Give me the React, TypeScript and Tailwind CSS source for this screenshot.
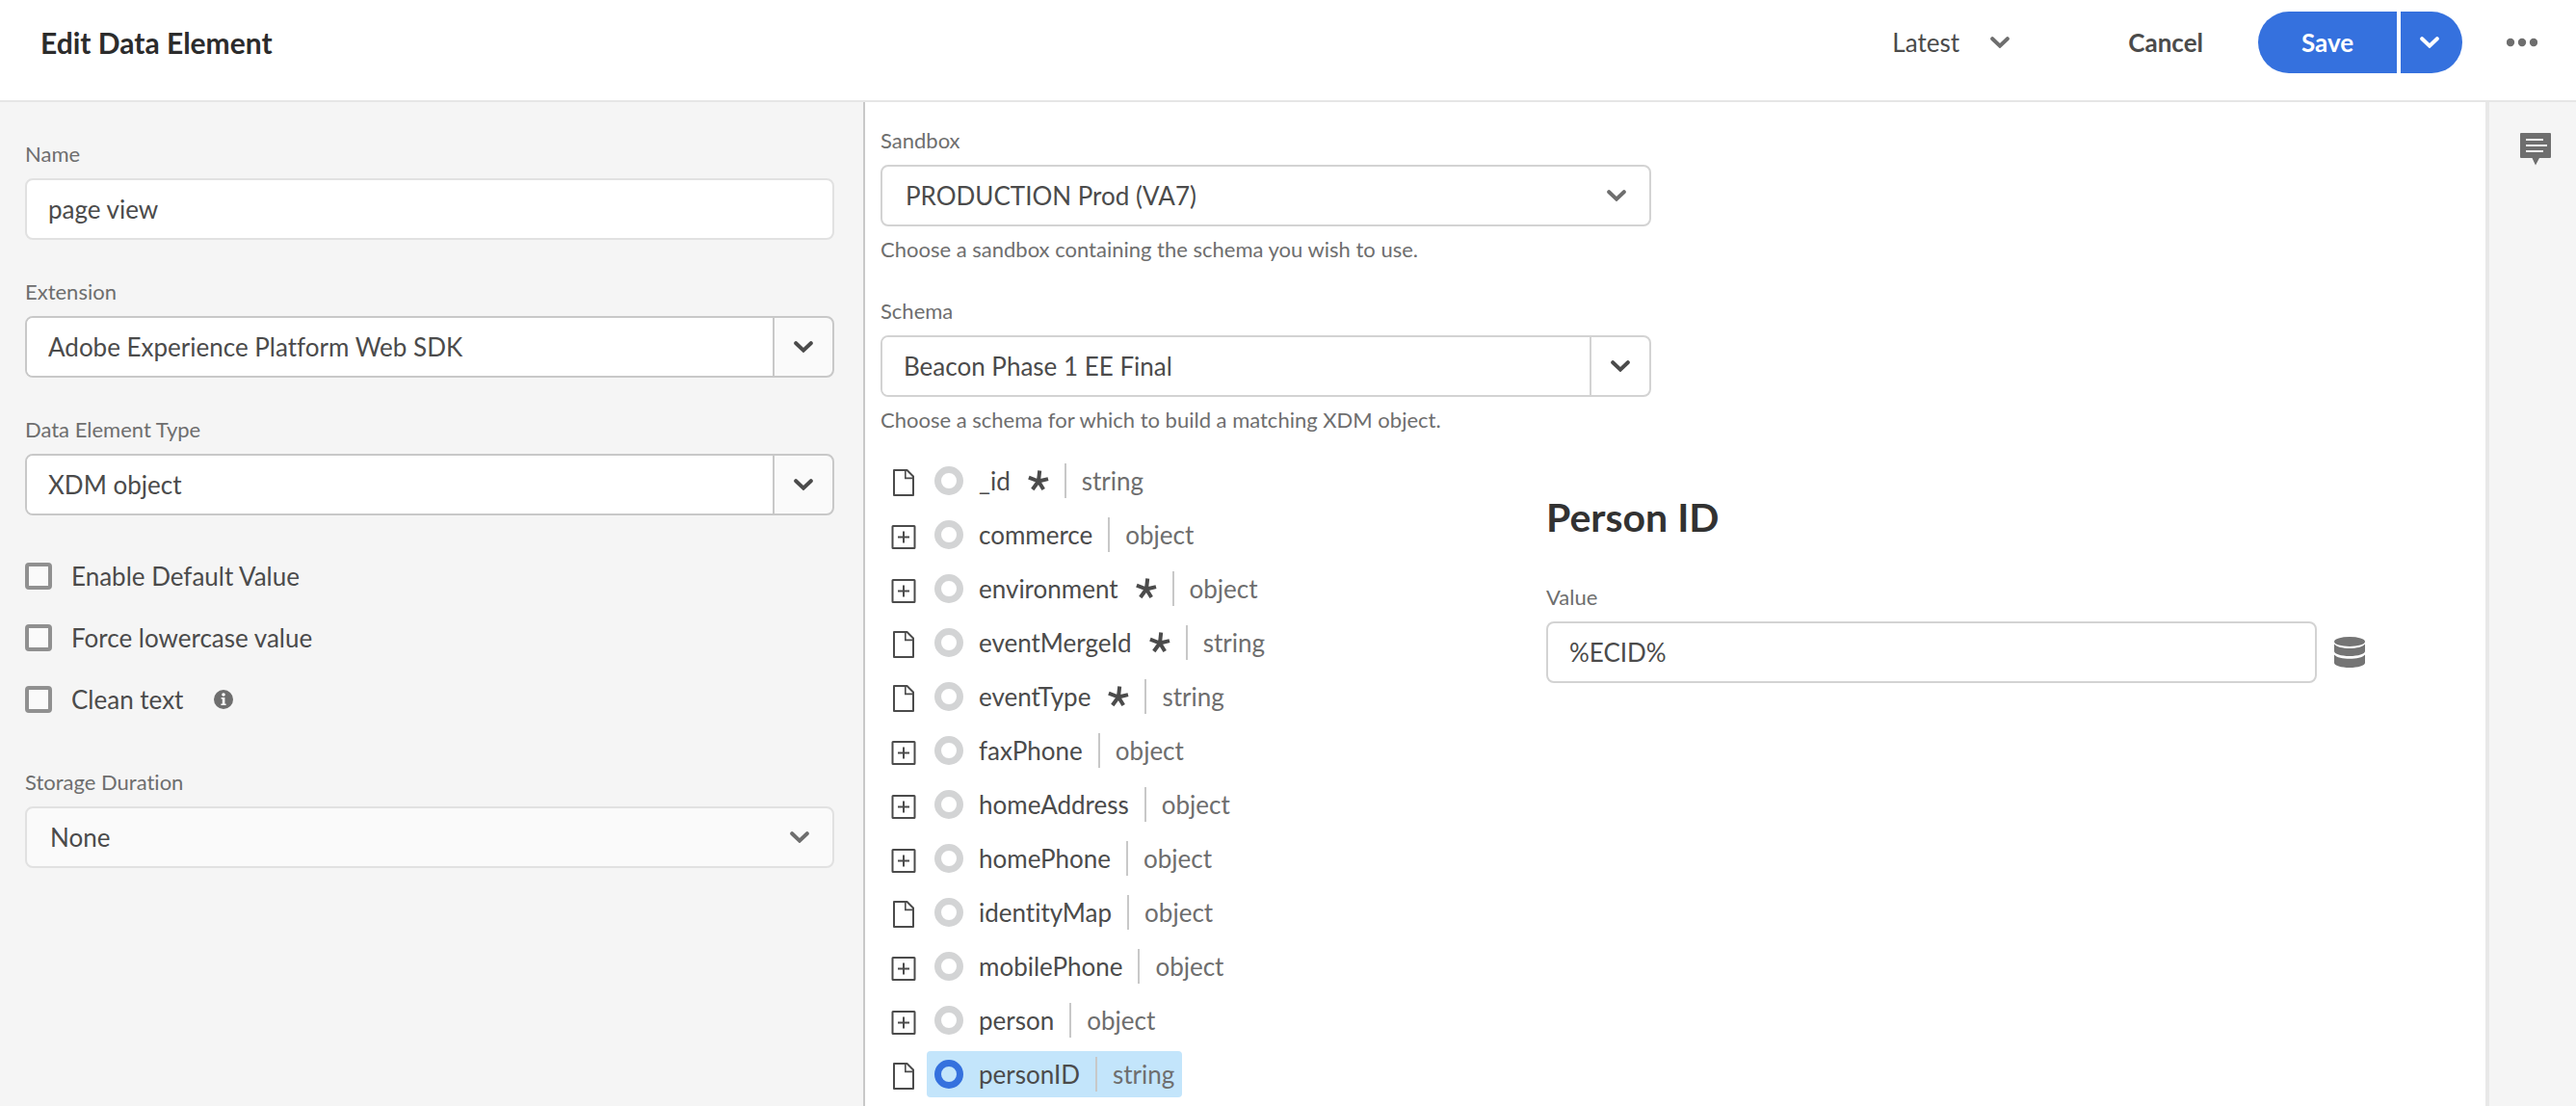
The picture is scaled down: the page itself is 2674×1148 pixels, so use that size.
import { useState, type ReactNode } from "react";

function Chevron({ className = "" }: { className?: string }) {
  return (
    <svg viewBox="0 0 20 12" className={`h-3 w-5 fill-none stroke-current ${className}`} aria-hidden="true">
      <path d="M2.2 2.2 10 9.6l7.8-7.4" strokeWidth="4" strokeLinecap="round" strokeLinejoin="miter" />
    </svg>
  );
}

function FileIcon() {
  return (
    <svg viewBox="0 0 26 32" className="h-8 w-[26px] shrink-0 fill-none stroke-[#4b4b4b]" aria-hidden="true">
      <path d="M3 5h13.5L23 11.5V31H3z" strokeWidth="2" strokeLinejoin="round" />
      <path d="M14.8 5v8.4H23" strokeWidth="1.6" />
    </svg>
  );
}

function ExpandIcon() {
  return (
    <svg viewBox="0 0 26 32" className="h-8 w-[26px] shrink-0 fill-none stroke-[#4b4b4b]" aria-hidden="true">
      <rect x="1.5" y="7" width="23" height="23" rx="0.5" strokeWidth="2" />
      <path d="M7 18.5h12M13 12.5v12" strokeWidth="2" />
    </svg>
  );
}

function Asterisk() {
  return (
    <svg viewBox="0 0 22 22" className="ml-[18px] h-[22px] w-[22px] fill-none stroke-[#4b4b4b]" role="img" aria-label="required">
      <path d="M11 11.5 12.2 0.500M11 11.5l10-2.4M11 11.5l5.200 8.500M11 11.5l-6.200 8.500M11 11.5 0.900 7.6" strokeWidth="4" />
    </svg>
  );
}

const labelClass = "block pb-[9px] text-[22px] leading-8 text-[#6e6e6e]";

function Field({ id, label, help, children }: { id: string; label: string; help?: string; children: ReactNode }) {
  return (
    <div>
      <label htmlFor={id} className={labelClass}>
        {label}
      </label>
      {children}
      {help && <p className="mt-2 text-[22px] leading-8 text-[#6e6e6e]">{help}</p>}
    </div>
  );
}

function ComboBox({ id, value, className }: { id: string; value: string; className: string }) {
  return (
    <div className={`flex h-16 overflow-hidden rounded-lg border-2 ${className}`}>
      <input id={id} defaultValue={value} className="min-w-0 flex-1 bg-white px-[22px] outline-none" />
      <button
        type="button"
        aria-label="Show options"
        className="flex w-[62px] shrink-0 items-center justify-center border-l-2 border-inherit"
      >
        <Chevron />
      </button>
    </div>
  );
}

function Picker({ id, value, className }: { id: string; value: string; className: string }) {
  return (
    <div className="relative">
      <select id={id} className={`h-16 w-full appearance-none rounded-lg border-2 px-6 outline-none ${className}`}>
        <option>{value}</option>
      </select>
      <Chevron className="pointer-events-none absolute top-[26px] right-[26px] text-[#6e6e6e]" />
    </div>
  );
}

function CheckOption({ label, children }: { label: string; children?: ReactNode }) {
  return (
    <div className="flex h-7 items-center">
      <label className="flex items-center gap-5">
        <input type="checkbox" className="size-7 appearance-none rounded border-4 border-[#909090] bg-[#fafafa]" />
        <span>{label}</span>
      </label>
      {children}
    </div>
  );
}

type Node = { name: string; type: "string" | "object"; required?: boolean; leaf?: boolean };

const nodes: Node[] = [
  { name: "_id", type: "string", required: true, leaf: true },
  { name: "commerce", type: "object" },
  { name: "environment", type: "object", required: true },
  { name: "eventMergeId", type: "string", required: true, leaf: true },
  { name: "eventType", type: "string", required: true, leaf: true },
  { name: "faxPhone", type: "object" },
  { name: "homeAddress", type: "object" },
  { name: "homePhone", type: "object" },
  { name: "identityMap", type: "object", leaf: true },
  { name: "mobilePhone", type: "object" },
  { name: "person", type: "object" },
  { name: "personID", type: "string", leaf: true },
];

function TreeRow({ node, selected, onSelect }: { node: Node; selected: boolean; onSelect: () => void }) {
  return (
    <li className="flex h-12 items-center gap-[11px]">
      {node.leaf ? (
        <FileIcon />
      ) : (
        <button type="button" aria-label={`Expand ${node.name}`}>
          <ExpandIcon />
        </button>
      )}
      <label className={`flex h-12 items-center rounded px-2 ${selected ? "bg-[#c3e5fb]" : ""}`}>
        <input
          type="radio"
          name="schema-node"
          checked={selected}
          onChange={onSelect}
          className="mr-4 size-[30px] appearance-none rounded-full border-[7px] border-[#d3d4d5] checked:border-[#3571de]"
        />
        <span>{node.name}</span>
        {node.required && <Asterisk />}
        <span className="ml-4 flex h-9 items-center border-l-2 border-[#c8c8c8] pl-4 text-[#6e6e6e]">{node.type}</span>
      </label>
    </li>
  );
}

export default function App() {
  const [selected, setSelected] = useState("personID");

  return (
    <div className="flex min-h-screen flex-col bg-white font-['Lato',sans-serif] text-[26px] leading-8 text-[#4b4b4b] [font-variant-ligatures:none]">
      <header className="flex h-[106px] items-center border-b-2 border-[#e6e6e6] pr-10 pb-4 pl-[42px]">
        <h1 className="mr-auto text-[30px] font-bold text-[#2c2c2c]">Edit Data Element</h1>
        <div className="relative mr-[123px] w-[122px]">
          <select aria-label="Version" className="w-full appearance-none bg-transparent outline-none">
            <option>Latest</option>
          </select>
          <Chevron className="pointer-events-none absolute top-[10px] right-0 text-[#6e6e6e]" />
        </div>
        <button type="button" className="mr-[57px] font-bold">
          Cancel
        </button>
        <div className="mr-[46px] flex gap-1 text-white">
          <button type="button" className="h-16 w-36 rounded-l-full bg-[#3571de] font-bold">
            Save
          </button>
          <button
            type="button"
            aria-label="More save options"
            className="flex size-16 items-center justify-center rounded-r-full bg-[#3571de] pr-1"
          >
            <Chevron />
          </button>
        </div>
        <button type="button" aria-label="More actions">
          <svg viewBox="0 0 32 10" className="h-[10px] w-8 fill-[#6e6e6e]" aria-hidden="true">
            <circle cx="4" cy="5" r="4.2" />
            <circle cx="16" cy="5" r="4.2" />
            <circle cx="28" cy="5" r="4.2" />
          </svg>
        </button>
      </header>

      <div className="grid flex-1 grid-cols-[898fr_1682fr_94px]">
        <aside className="flex flex-col gap-[38px] border-r-2 border-[#c8c8c8] bg-[#f5f5f5] pt-[38px] pr-[30px] pl-[26px]">
          <Field id="name" label="Name">
            <input
              id="name"
              defaultValue="page view"
              className="h-16 w-full rounded-lg border-2 border-[#e1e1e1] bg-white px-[22px] outline-none"
            />
          </Field>
          <Field id="extension" label="Extension">
            <ComboBox id="extension" value="Adobe Experience Platform Web SDK" className="border-[#c8c8c8] bg-[#fafafa]" />
          </Field>
          <Field id="element-type" label="Data Element Type">
            <ComboBox id="element-type" value="XDM object" className="border-[#c8c8c8] bg-[#fafafa]" />
          </Field>
          <div className="flex flex-col gap-9 pt-[11px] pb-[18px]">
            <CheckOption label="Enable Default Value" />
            <CheckOption label="Force lowercase value" />
            <CheckOption label="Clean text">
              <button type="button" aria-label="About clean text" className="ml-8">
                <svg viewBox="0 0 20 20" className="size-5" aria-hidden="true">
                  <circle cx="10" cy="10" r="10" className="fill-[#6e6e6e]" />
                  <circle cx="10" cy="5" r="1.8" className="fill-white" />
                  <path d="M7.6 8h3.8v6.4h1.2V16H7.4v-1.6h1.4V9.6H7.6z" className="fill-white" />
                </svg>
              </button>
            </CheckOption>
          </div>
          <Field id="storage" label="Storage Duration">
            <Picker id="storage" value="None" className="border-[#e1e1e1] bg-[#fafafa]" />
          </Field>
        </aside>

        <main className="min-w-0 pt-6 pl-4">
          <div className="flex max-w-[800px] flex-col gap-8">
            <Field id="sandbox" label="Sandbox" help="Choose a sandbox containing the schema you wish to use.">
              <Picker id="sandbox" value="PRODUCTION Prod (VA7)" className="border-[#d3d3d3] bg-white" />
            </Field>
            <Field id="schema" label="Schema" help="Choose a schema for which to build a matching XDM object.">
              <ComboBox id="schema" value="Beacon Phase 1 EE Final" className="border-[#d3d3d3] bg-white" />
            </Field>
          </div>

          <div className="mt-[23px] flex">
            <ul className="flex w-[691px] flex-col gap-2 pb-2 pl-[11px]">
              {nodes.map((node) => (
                <TreeRow
                  key={node.name}
                  node={node}
                  selected={node.name === selected}
                  onSelect={() => setSelected(node.name)}
                />
              ))}
            </ul>
            <section className="w-[850px] pt-9">
              <h2 className="text-[41px] leading-[52px] font-bold text-[#323232]">Person ID</h2>
              <div className="mt-[41px]">
                <label htmlFor="value" className={labelClass}>
                  Value
                </label>
                <div className="flex items-center gap-[18px]">
                  <input
                    id="value"
                    defaultValue="%ECID%"
                    className="h-16 min-w-0 flex-1 rounded-lg border-2 border-[#d3d3d3] bg-white px-[22px] outline-none"
                  />
                  <button type="button" aria-label="Select data element">
                    <svg viewBox="0 0 32 32" className="size-8 fill-[#747474]" aria-hidden="true">
                      <ellipse cx="16" cy="5" rx="16" ry="5" />
                      <path d="M0 7.5c2.500 3 9 4.500 16 4.500s13.500-1.500 16-4.500V15c0 2.800-7.200 5-16 5S0 17.800 0 15z" />
                      <path d="M0 18.500c2.500 3 9 4.300 16 4.300s13.500-1.300 16-4.300V27c0 2.800-7.200 5-16 5S0 29.800 0 27z" />
                    </svg>
                  </button>
                </div>
              </div>
            </section>
          </div>
        </main>

        <aside className="border-l-4 border-[#e8e8e8] bg-[#f5f5f5] pt-8 pl-8">
          <button type="button" aria-label="Notes" className="block">
            <svg viewBox="0 0 32 34" className="h-[34px] w-8" aria-hidden="true">
              <path d="M1 0h30a1 1 0 0 1 1 1v24a1 1 0 0 1-1 1H20l-4 7.500L12.500 26H1a1 1 0 0 1-1-1V1a1 1 0 0 1 1-1z" className="fill-[#6e6e6e]" />
              <path d="M6 7h18M6 13h22M6 19h18" strokeWidth="2" className="stroke-[#f5f5f5]" />
            </svg>
          </button>
        </aside>
      </div>
    </div>
  );
}
